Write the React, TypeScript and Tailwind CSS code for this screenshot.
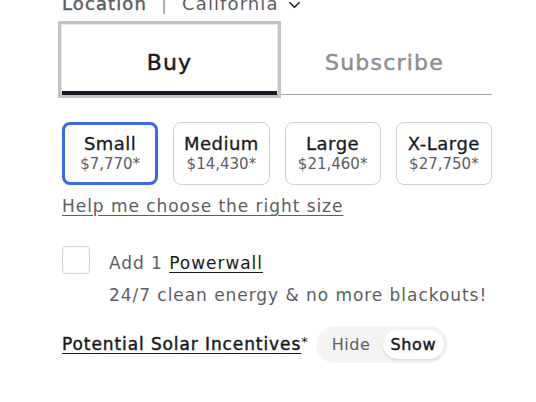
import { useState } from "react";

const SIZES = [
  { name: "Small", price: "$7,770*" },
  { name: "Medium", price: "$14,430*" },
  { name: "Large", price: "$21,460*" },
  { name: "X-Large", price: "$27,750*" },
];

const FONT = "font-['DejaVu_Sans',_'Noto_Sans',_sans-serif]";
// DejaVu has no medium weight; a thin stroke stands in for it
const MEDIUM = "[-webkit-text-stroke:0.45px_currentColor]";

export default function App() {
  const [tab, setTab] = useState<"buy" | "subscribe">("buy");
  const [size, setSize] = useState(0);
  const [powerwall, setPowerwall] = useState(false);
  const [showIncentives, setShowIncentives] = useState(true);

  return (
    <div className={`${FONT} w-[536px] h-[402px] overflow-hidden bg-white text-[#171a20]`}>
      <div className="ml-[62px] w-[430px]">
        {/* Location */}
        <div className="-mt-[6px] h-[20px] flex items-center text-[18px] leading-[20px] tracking-[1.1px] text-[#5c5e62]">
          <span className={MEDIUM}>Location</span>
          <span className="mx-[14px] text-[#9a9a9a]">|</span>
          <span>California</span>
          <svg className="ml-[8px] w-[15px] h-[15px]" viewBox="0 0 16 16" fill="none" stroke="#171a20" strokeWidth="1.6">
            <path d="M2.5 5.5L8 11l5.5-5.5" />
          </svg>
        </div>

        {/* Buy / Subscribe tabs */}
        <div className="mt-[11px] flex border-b border-[#a2a3a5]">
          <button
            type="button"
            onClick={() => setTab("buy")}
            className={[
              "relative flex-1 h-[69px] pt-[6px] text-[22px] tracking-[1.2px]",
              MEDIUM,
              tab === "buy"
                ? "text-[#171a20] outline outline-[3px] outline-[#c4c4c4] outline-offset-[1px] shadow-[0_0_3px_2px_rgba(0,0,0,0.12)]"
                : "text-[#8e8e90]",
            ].join(" ")}
          >
            Buy
            {tab === "buy" && <span className="absolute left-0 right-0 -bottom-[1px] h-[4px] bg-[#171a20]" />}
          </button>
          <button
            type="button"
            onClick={() => setTab("subscribe")}
            className={[
              "relative flex-1 h-[69px] pt-[6px] text-[22px] tracking-[1.2px]",
              MEDIUM,
              tab === "subscribe" ? "text-[#171a20]" : "text-[#8e8e90]",
            ].join(" ")}
          >
            Subscribe
            {tab === "subscribe" && <span className="absolute left-0 right-0 -bottom-[1px] h-[4px] bg-[#171a20]" />}
          </button>
        </div>

        {/* Size options */}
        <div className="mt-[27px] grid grid-cols-4 gap-[15px]">
          {SIZES.map((s, i) => (
            <button
              key={s.name}
              type="button"
              onClick={() => setSize(i)}
              className={[
                "h-[63px] rounded-[8px] flex flex-col items-center justify-center",
                i === size ? "border-[3px] border-[#3e6ae1]" : "border border-[#d0d1d2]",
              ].join(" ")}
            >
              <span className="text-[18px] leading-[22px] tracking-[0.5px] text-[#171a20] [-webkit-text-stroke:0.3px_currentColor]">
                {s.name}
              </span>
              <span className="text-[15px] leading-[19px] text-[#5c5e62]">{s.price}</span>
            </button>
          ))}
        </div>

        <a
          href="#"
          className="mt-[8px] block text-[17px] leading-[26px] tracking-[0.95px] text-[#5c5e62] underline underline-offset-[3px]"
        >
          Help me choose the right size
        </a>

        {/* Powerwall */}
        <div className="mt-[27px] flex">
          <button
            type="button"
            onClick={() => setPowerwall(!powerwall)}
            aria-label="Add Powerwall"
            className="w-[28px] h-[28px] rounded-[4px] border border-[#d0d1d2] flex-shrink-0"
          >
            {powerwall && (
              <svg viewBox="0 0 16 16" className="w-full h-full" fill="none" stroke="#171a20" strokeWidth="1.8">
                <path d="M3.5 8.5l3 3 6-7" />
              </svg>
            )}
          </button>
          <div className="ml-[19px] mt-[5px] text-[17px] leading-[24px] tracking-[0.95px] text-[#5c5e62]">
            <p>
              Add 1{" "}
              <span className="text-[#171a20] underline underline-offset-[3px]">Powerwall</span>
            </p>
            <p className="mt-[8px]">24/7 clean energy &amp; no more blackouts!</p>
          </div>
        </div>

        {/* Incentives */}
        <div className="mt-[19px] flex items-center">
          <span
            className={`text-[17px] tracking-[0.9px] text-[#171a20] underline underline-offset-[3px] ${MEDIUM}`}
          >
            Potential Solar Incentives
          </span>
          <span className="self-start mt-[6px] text-[13px] text-[#171a20]">*</span>
          <div className="ml-[8px] h-[37px] rounded-full bg-[#f4f4f4] p-[4px] flex items-center text-[16px] tracking-[0.6px]">
            <button
              type="button"
              onClick={() => setShowIncentives(false)}
              className={[
                "h-full px-[12px] rounded-full",
                !showIncentives ? `bg-white text-[#171a20] shadow-sm ${MEDIUM}` : "text-[#5c5e62]",
              ].join(" ")}
            >
              Hide
            </button>
            <button
              type="button"
              onClick={() => setShowIncentives(true)}
              className={[
                "h-full px-[8px] rounded-full",
                showIncentives ? `bg-white text-[#171a20] shadow-sm ${MEDIUM}` : "text-[#5c5e62]",
              ].join(" ")}
            >
              Show
            </button>
          </div>
        </div>
      </div>
    </div>
  );
}
